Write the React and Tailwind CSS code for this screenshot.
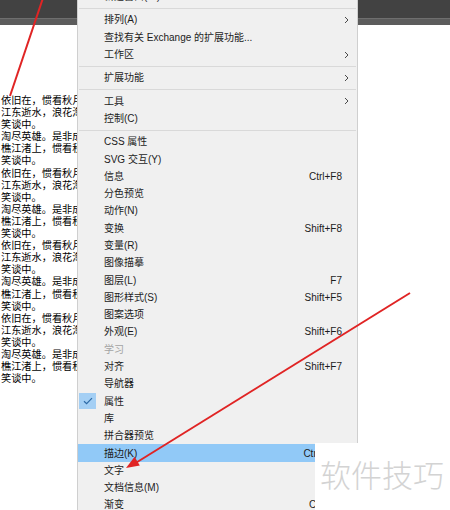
import { Fragment } from 'react'

// poem lines in the document behind the menu (they run under the menu)
const stanza = [
  '依旧在，惯看秋月春风。一壶浊酒喜相逢。',
  '江东逝水，浪花淘尽英雄。是非成败转头空。',
  '笑谈中。',
  '淘尽英雄。是非成败转头空。青山依旧在，',
  '樵江渚上，惯看秋月春风。一壶浊酒喜相逢。',
  '笑谈中。',
]
const docLines = [...stanza, ...stanza, ...stanza, ...stanza]

const menu = [
  { label: '新建窗口(W)' },
  { sep: true },
  { label: '排列(A)', sub: true },
  { label: '查找有关 Exchange 的扩展功能...' },
  { label: '工作区', sub: true },
  { sep: true },
  { label: '扩展功能', sub: true },
  { sep: true },
  { label: '工具', sub: true },
  { label: '控制(C)' },
  { sep: true },
  { label: 'CSS 属性' },
  { label: 'SVG 交互(Y)' },
  { label: '信息', key: 'Ctrl+F8' },
  { label: '分色预览' },
  { label: '动作(N)' },
  { label: '变换', key: 'Shift+F8' },
  { label: '变量(R)' },
  { label: '图像描摹' },
  { label: '图层(L)', key: 'F7' },
  { label: '图形样式(S)', key: 'Shift+F5' },
  { label: '图案选项' },
  { label: '外观(E)', key: 'Shift+F6' },
  { label: '学习', disabled: true },
  { label: '对齐', key: 'Shift+F7' },
  { label: '导航器' },
  { label: '属性', checked: true },
  { label: '库' },
  { label: '拼合器预览' },
  { label: '描边(K)', key: 'Ctrl+F10', active: true },
  { label: '文字' },
  { label: '文档信息(M)' },
  { label: '渐变', key: 'Ctrl+F9' },
  { label: '画板' },
]

function Chevron() {
  return (
    <svg width="5" height="8" viewBox="0 0 5 8" className="shrink-0">
      <path d="M1 1 L4 4 L1 7" fill="none" stroke="#4a4a4a" strokeWidth="1" />
    </svg>
  )
}

function MenuRow({ item }) {
  if (item.sep) {
    return (
      <div className="h-[6px] flex items-center px-[1px]">
        <div className="h-px w-full bg-[#d9d9d9]" />
      </div>
    )
  }
  return (
    <div
      className={`h-[17.3px] flex items-center ${item.sub ? 'pr-[8px]' : 'pr-[15px]'} ${
        item.active ? 'bg-[#91c9f7]' : ''
      } ${item.disabled ? 'text-[#a3a3a3]' : 'text-[#1c1c1c]'}`}
    >
      <div className="w-[26px] h-full flex items-center pl-[1px] shrink-0">
        {item.checked && (
          <div className="w-[17px] h-[16px] bg-[#a4cff4] flex items-center justify-center">
            <svg width="10" height="8" viewBox="0 0 10 8">
              <path d="M1 4.2 L3.6 6.6 L9 1.2" fill="none" stroke="#2c6aa6" strokeWidth="1.2" />
            </svg>
          </div>
        )}
      </div>
      <span className="flex-1 whitespace-nowrap">{item.label}</span>
      {item.key && <span className="whitespace-nowrap">{item.key}</span>}
      {item.sub && <Chevron />}
    </div>
  )
}

export default function App() {
  return (
    <div className="relative w-[450px] h-[510px] overflow-hidden bg-white">
      {/* application toolbar */}
      <div className="h-[18px] bg-[#424242]" />
      <div className="h-[7px] bg-[#5c5c5c] border-t border-[#6e6e6e]" />

      {/* document text */}
      <div className="pt-[70px] pl-[1px] text-[10.2px] leading-[12.1px] text-black font-['Liberation_Serif','Noto_Sans_CJK_SC',serif]">
        {docLines.map((line, i) => (
          <div key={i} className="whitespace-nowrap">
            {line}
          </div>
        ))}
      </div>

      {/* window menu */}
      <div className="absolute left-[77px] top-[-12px] w-[281px] bg-[#f0f0f0] border-x border-[#cfcfcf] text-[10px] font-['Liberation_Sans','Noto_Sans_CJK_SC',sans-serif]">
        {menu.map((item, i) => (
          <Fragment key={i}>
            <MenuRow item={item} />
          </Fragment>
        ))}
      </div>

      {/* site watermark */}
      <div className="absolute left-[315px] top-[443px] w-[135px] h-[67px] bg-white pl-[5px] pt-[15px]">
        <span className="text-[31px] leading-[31px] font-light text-[#d3d3d3] whitespace-nowrap font-['Noto_Sans_CJK_SC',sans-serif]">
          软件技巧
        </span>
      </div>

      {/* annotation arrows */}
      <svg className="absolute inset-0 pointer-events-none" width="450" height="510" viewBox="0 0 450 510">
        <line x1="43" y1="-2" x2="10" y2="96" stroke="#e02424" strokeWidth="2" />
        <line x1="410" y1="293" x2="134" y2="464" stroke="#e02424" strokeWidth="2" />
        <polygon points="126,468 139.8,465.4 134.6,456.8" fill="#e02424" />
      </svg>
    </div>
  )
}
